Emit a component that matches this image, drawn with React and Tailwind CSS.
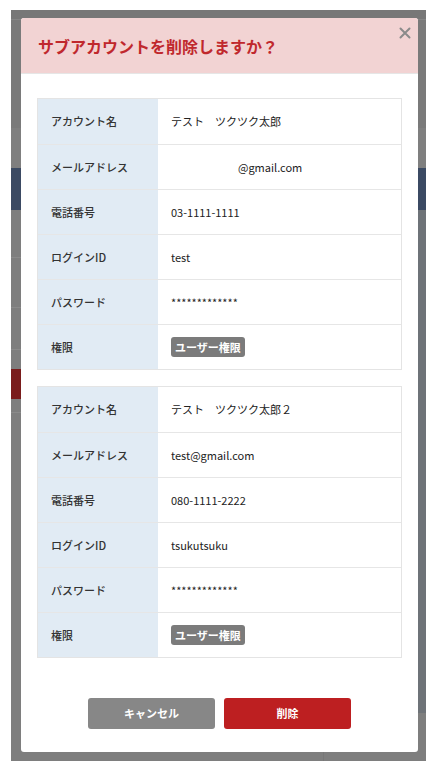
import React from "react";

const rows1 = [
  ["アカウント名", "テスト　ツクツク太郎"],
  ["メールアドレス", "EMAIL1"],
  ["電話番号", "03-1111-1111"],
  ["ログインID", "test"],
  ["パスワード", "*************"],
  ["権限", "BADGE"],
];
const rows2 = [
  ["アカウント名", "テスト　ツクツク太郎２"],
  ["メールアドレス", "test@gmail.com"],
  ["電話番号", "080-1111-2222"],
  ["ログインID", "tsukutsuku"],
  ["パスワード", "*************"],
  ["権限", "BADGE"],
];

function Value({ v }) {
  if (v === "BADGE")
    return (
      <span className="inline-flex h-[20px] items-center rounded-[3px] bg-[#7b7b7b] px-[4px] text-[11px] font-bold text-white">
        ユーザー権限
      </span>
    );
  if (v === "EMAIL1") return <span className="pl-[67px]">@gmail.com</span>;
  return <span>{v}</span>;
}

function Table({ rows }) {
  return (
    <div className="border border-[#e4e4e4]">
      {rows.map(([k, v], i) => (
        <div
          key={k}
          className={`flex h-[45px] ${i > 0 ? "border-t border-[#e6e6e6]" : ""}`}
        >
          <div className="flex w-[120px] items-center bg-[#e1ebf4] pl-[13px] text-[11px] font-medium text-[#333]">
            {k}
          </div>
          <div className="flex flex-1 items-center pl-[13px] text-[11px] text-[#222]">
            <Value v={v} />
          </div>
        </div>
      ))}
    </div>
  );
}

export default function App() {
  return (
    <div
      className="h-[769px] w-[439px] bg-white pl-[11px] pt-[10px]"
      style={{ fontFamily: '"Noto Sans CJK JP", "Noto Sans", sans-serif' }}
    >
      <div className="relative flex h-[751px] w-[415px] flex-col overflow-hidden bg-[#7e7e7e]">
        {/* dimmed background app */}
        <div className="h-[10px] border-b border-[#858585] bg-[#777]" />
        <div className="h-[108px] bg-[#7a7a7a]" />
        <div className="h-[40px] bg-[#7f7f7f]" />
        <div className="h-[42px] bg-[#3b4a63]" />
        <div className="flex flex-1">
          <div className="flex flex-1 flex-col">
            <div className="h-[48px] border-b border-[#8a8a8a]" />
            <div className="h-[50px] border-b border-[#8a8a8a]" />
            <div className="h-[42px] border-b border-[#8a8a8a]" />
            <div className="h-[19px]" />
            <div className="h-[30px] bg-[#7a1c1c]" />
            <div className="h-[14px] border-b border-[#8a8a8a]" />
          </div>
          <div className="flex w-[103px] flex-col">
            <div className="h-[503px] bg-[#6e7378]" />
            <div className="flex-1 border-l border-[#777]" />
          </div>
        </div>

        {/* modal */}
        <div className="absolute left-[10px] top-[8px] flex h-[734px] w-[397px] flex-col overflow-hidden rounded-[3px] bg-white">
          <div className="relative flex h-[56px] items-center border-b border-[#e6e6e6] bg-[#f2d3d3] pl-[17px]">
            <span className="text-[16px] font-bold text-[#c0282d]">
              サブアカウントを削除しますか？
            </span>
            <svg
              className="absolute right-[7px] top-[9px]"
              width="12"
              height="12"
              viewBox="0 0 12 12"
            >
              <path
                d="M1.5 1.5 L10.5 10.5 M10.5 1.5 L1.5 10.5"
                stroke="#8a8a8a"
                strokeWidth="2"
                strokeLinecap="round"
              />
            </svg>
          </div>
          <div className="flex flex-col gap-[16px] px-[16px] pt-[24px]">
            <Table rows={rows1} />
            <Table rows={rows2} />
          </div>
          <div className="mt-[40px] flex justify-center gap-[9px]">
            <button className="h-[31px] w-[127px] rounded-[3px] bg-[#878787] text-[11px] font-bold text-white">
              キャンセル
            </button>
            <button className="h-[31px] w-[127px] rounded-[3px] bg-[#bd1f21] text-[11px] font-bold text-white">
              削除
            </button>
          </div>
        </div>
      </div>
    </div>
  );
}
